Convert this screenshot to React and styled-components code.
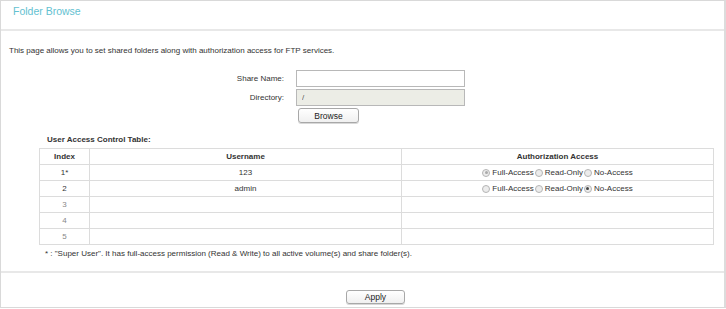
import React from "react"
import styled, { createGlobalStyle } from "styled-components"

const GlobalStyle = createGlobalStyle`
  html, body { margin: 0; padding: 0; background: #fff; }
  body { font-family: "Liberation Sans", Arial, sans-serif; font-size: 8px; color: #333; }
`

const Panel = styled.div`
  width: 723px;
  height: 306px;
  border: 1px solid #d9d9d9;
  border-right: 2px solid #dcdcdc;
  display: flex;
  flex-direction: column;
`

const Header = styled.div`
  height: 30px;
  border-bottom: 2px solid #e8e8e8;
  padding: 4px 0 0 12px;
  box-sizing: border-box;
  h1 {
    margin: 0;
    font-size: 10.5px;
    line-height: 12px;
    font-weight: normal;
    color: #63c1d1;
  }
`

const Body = styled.div`
  flex: 1;
  padding: 15px 0 0 8px;
`

const Intro = styled.p`
  margin: 0 0 14px 0;
  line-height: 10px;
`

const Form = styled.div`
  display: grid;
  grid-template-columns: 275px 170px;
  column-gap: 12px;
  row-gap: 2px;
  align-items: center;
`

const Label = styled.label`
  text-align: right;
  line-height: 10px;
`

const Field = styled.input`
  box-sizing: border-box;
  width: 169px;
  height: 17px;
  border: 1px solid #b8b8b8;
  background: ${p => (p.readOnly ? "#ecede6" : "#fff")};
  font: inherit;
  font-size: 8px;
  color: #555;
  padding: 0 0 0 5px;
  outline: none;
`

const Button = styled.button`
  box-sizing: border-box;
  width: ${p => p.$w}px;
  height: ${p => p.$h}px;
  border: 1px solid #a8a8a8;
  border-radius: 3px;
  background: linear-gradient(#ffffff, #f0f0f0);
  font: inherit;
  font-size: 8.5px;
  color: #222;
  padding: 0;
  line-height: 10px;
  box-shadow: 0 1px 0 #d8d8d8;
`

const BrowseCell = styled.div`
  grid-column: 2;
  padding-left: 2px;
  display: flex;
`

const TableTitle = styled.div`
  font-weight: bold;
  margin: 12px 0 3px 38px;
  line-height: 10px;
`

const Table = styled.table`
  margin-left: 30px;
  width: 675px;
  border-collapse: collapse;
  th, td {
    border: 1px solid #dcdcdc;
    height: 15px;
    padding: 0;
    text-align: center;
    line-height: 10px;
  }
  th { font-weight: bold; }
`

const IndexCell = styled.td`
  width: 49px;
  color: ${p => (p.$muted ? "#888" : "#333")};
`

const Radios = styled.div`
  display: flex;
  justify-content: center;
  align-items: center;
  gap: 1px;
`

const RadioLabel = styled.span`
  display: inline-flex;
  align-items: center;
  gap: 2px;
`

const Dot = styled.span`
  width: 8px;
  height: 8px;
  border-radius: 50%;
  border: 1px solid #b5b5b5;
  background: #ececec;
  box-sizing: border-box;
  display: inline-flex;
  align-items: center;
  justify-content: center;
  &::after {
    content: "";
    width: 3px;
    height: 3px;
    border-radius: 50%;
    background: ${p => (p.$on ? (p.$dim ? "#aaa" : "#444") : "transparent")};
  }
`

const Note = styled.p`
  margin: 4px 0 0 36px;
  line-height: 10px;
`

const Footer = styled.div`
  border-top: 2px solid #e8e8e8;
  height: 36px;
  display: flex;
  align-items: flex-start;
  justify-content: center;
  padding: 17px 0 0 26px;
  box-sizing: border-box;
`

const ACCESS = ["Full-Access", "Read-Only", "No-Access"]

const rows = [
  { idx: "1*", user: "123", access: 0, dim: true },
  { idx: "2", user: "admin", access: 2 },
  { idx: "3" },
  { idx: "4" },
  { idx: "5" },
]

const AccessRadios = ({ value, dim }) => (
  <Radios>
    {ACCESS.map(a => (
      <RadioLabel key={a}>
        <Dot $on={ACCESS[value] === a} $dim={dim} />
        {a}
      </RadioLabel>
    ))}
  </Radios>
)

export default function App() {
  return (
    <>
      <GlobalStyle />
      <Panel>
        <Header>
          <h1>Folder Browse</h1>
        </Header>
        <Body>
          <Intro>This page allows you to set shared folders along with authorization access for FTP services.</Intro>
          <Form>
            <Label>Share Name:</Label>
            <Field defaultValue="" />
            <Label>Directory:</Label>
            <Field readOnly value="/" />
            <BrowseCell>
              <Button $w={61} $h={15}>Browse</Button>
            </BrowseCell>
          </Form>
          <TableTitle>User Access Control Table:</TableTitle>
          <Table>
            <thead>
              <tr>
                <th>Index</th>
                <th style={{ width: 311 }}>Username</th>
                <th>Authorization Access</th>
              </tr>
            </thead>
            <tbody>
              {rows.map(r => (
                <tr key={r.idx}>
                  <IndexCell $muted={!r.user}>{r.idx}</IndexCell>
                  <td>{r.user || ""}</td>
                  <td>{r.user ? <AccessRadios value={r.access} dim={r.dim} /> : ""}</td>
                </tr>
              ))}
            </tbody>
          </Table>
          <Note>* : "Super User". It has full-access permission (Read &amp; Write) to all active volume(s) and share folder(s).</Note>
        </Body>
        <Footer>
          <Button $w={59} $h={14}>Apply</Button>
        </Footer>
      </Panel>
    </>
  )
}
